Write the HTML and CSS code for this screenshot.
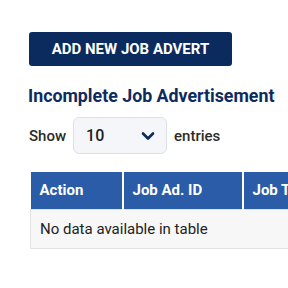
FILE: index.html
```html
<!DOCTYPE html>
<html lang="en">
<head>
    <meta charset="UTF-8">
    <title>Job Adverts</title>
    <link rel="stylesheet" href="styles.css">
</head>
<body>
<div class="page">
    <a class="btn_add" href="#">ADD NEW JOB ADVERT</a>

    <h2 class="title">Incomplete Job Advertisement</h2>

    <div class="length">
        <span>Show</span>
        <div class="select">
            <span class="select_val">10</span>
            <svg class="chevron" width="14" height="10" viewBox="0 0 14 10">
                <path d="M2 2.5 L7 7.5 L12 2.5" fill="none" stroke="#0b2a5c" stroke-width="2.6" stroke-linecap="round" stroke-linejoin="round"/>
            </svg>
        </div>
        <span>entries</span>
    </div>

    <div class="table_wrap">
        <table class="jobs">
            <colgroup>
                <col class="c1">
                <col class="c2">
                <col class="c3">
            </colgroup>
            <thead>
            <tr>
                <th>Action</th>
                <th>Job Ad. ID</th>
                <th>Job Title</th>
            </tr>
            </thead>
            <tbody>
            <tr>
                <td colspan="3" class="empty">No data available in table</td>
            </tr>
            </tbody>
        </table>
    </div>
</div>
</body>
</html>
```

FILE: styles.css
```css
*{
    margin: 0;
    padding: 0;
    box-sizing: border-box;
}
body{
    background: #ffffff;
    font-family: Roboto, "Liberation Sans", sans-serif;
    color: #222222;
    overflow: hidden;
}
.page{
    padding: 32px 0 0 29px;
}
.btn_add{
    display: flex;
    align-items: center;
    justify-content: center;
    width: 203px;
    height: 34px;
    border-radius: 3px;
    background-color: #0b2b5e;
    color: #ffffff;
    font-size: 15px;
    font-weight: 700;
    text-decoration: none;
}
.title{
    margin-top: 20px;
    margin-left: -1px;
    font-size: 17.8px;
    font-weight: 700;
    line-height: 20px;
    color: #0d2c5e;
}
.length{
    display: flex;
    align-items: center;
    gap: 7px;
    margin-top: 11px;
    font-size: 15px;
    font-weight: 500;
    color: #2b2b2b;
}
.select{
    display: flex;
    align-items: center;
    justify-content: space-between;
    width: 94px;
    height: 37px;
    padding: 0 11px 0 12px;
    border: 1px solid #dde0e5;
    border-radius: 6px;
    background-color: #f4f6f9;
}
.select_val{
    font-size: 16px;
    font-weight: 500;
    color: #1e1e1e;
}
.table_wrap{
    margin-top: 18px;
    margin-left: 1px;
    overflow: hidden;
}
.jobs{
    width: 412px;
    table-layout: fixed;
    border-collapse: collapse;
}
.c1{ width: 92px; }
.c2{ width: 120px; }
.c3{ width: 200px; }
.jobs th{
    height: 37px;
    padding-left: 9px;
    text-align: left;
    background-color: #2a5ca7;
    border-right: 2px solid #ffffff;
    color: #ffffff;
    font-size: 15px;
    font-weight: 700;
    white-space: nowrap;
}
.jobs td.empty{
    height: 39px;
    padding-left: 9px;
    background-color: #f7f7f7;
    border: 1px solid #e2e2e2;
    font-size: 15px;
    color: #222222;
}
```
